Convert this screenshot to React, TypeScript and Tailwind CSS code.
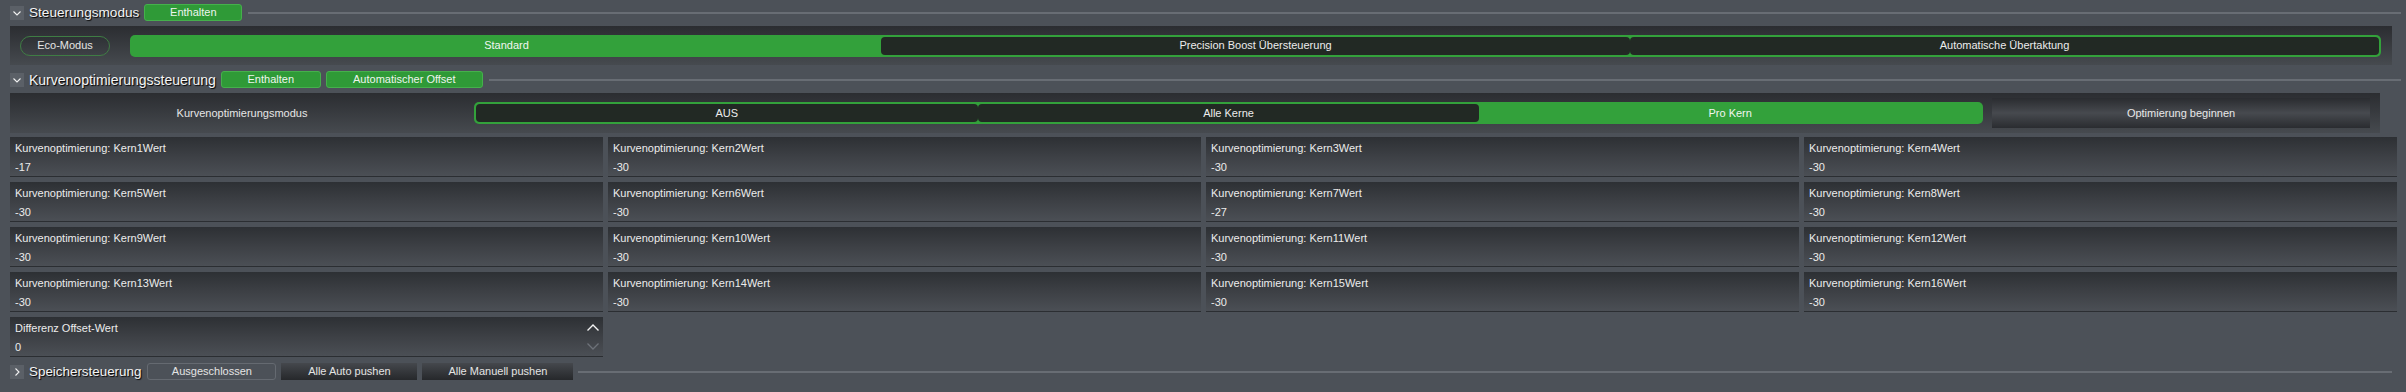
import React from "react";

const cores = [-17, -30, -30, -30, -30, -30, -27, -30, -30, -30, -30, -30, -30, -30, -30, -30];

function Chevron({ open }: { open: boolean }) {
  return (
    <div className="flex h-[14px] w-[14px] shrink-0 items-center justify-center bg-[#5b6067]">
      <svg width="10" height="10" viewBox="0 0 10 10" fill="none" stroke="#f2f2f2" strokeWidth="1.1">
        {open ? <polyline points="1.5,3.5 5,7 8.5,3.5" /> : <polyline points="3.5,1.5 7,5 3.5,8.5" />}
      </svg>
    </div>
  );
}

function GreenTag({ label, w }: { label: string; w: string }) {
  return (
    <div className={`flex h-[17px] ${w} shrink-0 items-center justify-center rounded-[3px] border border-[#45b04c] bg-[#2f9a37] text-[11px] text-[#eef5ee]`}>
      {label}
    </div>
  );
}

function SectionHeader({ open, title, size, children }: { open: boolean; title: string; size: string; children?: React.ReactNode }) {
  return (
    <div className="flex h-[17px] items-center">
      <Chevron open={open} />
      <span className={`ml-[5px] ${size} leading-none text-[#f4f4f4] [text-shadow:1px_1px_1px_#000]`}>{title}</span>
      <div className="ml-[5px] flex gap-[5px]">{children}</div>
      <div className="ml-[6px] mr-[5px] h-[2px] flex-1 bg-[#686d74]" />
    </div>
  );
}

function Segmented({ items, active }: { items: string[]; active: number }) {
  return (
    <div className="flex h-[22px] flex-1 rounded-[5px] bg-[#33a13b] p-[2px]">
      {items.map((it, i) => (
        <div
          key={it}
          className={`flex flex-1 items-center justify-center text-[11px] ${
            i === active ? "text-[#f0f6f0]" : "rounded-[4px] bg-[#222924] text-[#ececec]"
          }`}
        >
          {it}
        </div>
      ))}
    </div>
  );
}

function Card({ label, value, children }: { label: string; value: string; children?: React.ReactNode }) {
  return (
    <div className="relative h-[40px] border-b border-[#2b2e32] bg-linear-to-b from-[#2d3034] via-[#3d4045] to-[#4b4f55] pl-[5px] pt-[5px]">
      <div className="text-[11px] leading-[13px] text-[#ececec]">{label}</div>
      <div className="mt-[6px] text-[11px] leading-[13px] text-[#ececec]">{value}</div>
      {children}
    </div>
  );
}

export default function App() {
  return (
    <div className="min-h-screen w-full bg-[#4c5158] pl-[10px] pt-[4px] font-['Liberation_Sans',Arial,sans-serif] text-[#ececec]">
      <SectionHeader open title="Steuerungsmodus" size="text-[13.6px]">
        <GreenTag label="Enthalten" w="w-[98px]" />
      </SectionHeader>

      <div className="mr-[14px] mt-[5px] flex h-[39px] items-center bg-linear-to-b from-[#2b2d31] to-[#464a4f] pl-[10px] pr-[11px]">
        <div className="flex h-[20px] w-[90px] items-center justify-center rounded-full border-[1.5px] border-[#3f7d44] bg-linear-to-b from-[#2e3135] to-[#3e4146] text-[11px] text-[#e4e4e4]">
          Eco-Modus
        </div>
        <div className="ml-[20px] flex flex-1">
          <Segmented items={["Standard", "Precision Boost Übersteuerung", "Automatische Übertaktung"]} active={0} />
        </div>
      </div>

      <div className="mt-[6px]">
        <SectionHeader open title="Kurvenoptimierungssteuerung" size="text-[14px]">
          <GreenTag label="Enthalten" w="w-[100px]" />
          <GreenTag label="Automatischer Offset" w="w-[157px]" />
        </SectionHeader>
      </div>

      <div className="mr-[26px] mt-[5px] flex h-[40px] items-center bg-linear-to-b from-[#2b2d31] to-[#464a4f] pr-[10px]">
        <div className="flex w-[464px] items-center justify-center text-[11px] text-[#e6e6e6]">Kurvenoptimierungsmodus</div>
        <div className="flex w-[1509px]">
          <Segmented items={["AUS", "Alle Kerne", "Pro Kern"]} active={2} />
        </div>
        <div className="ml-[9px] flex h-[30px] flex-1 items-center justify-center bg-linear-to-b from-[#2a2c30] via-[#474a4f] to-[#2a2c30] text-[11px] text-[#e8e8e8]">
          Optimierung beginnen
        </div>
      </div>

      <div className="mr-[9px] mt-[4px] grid grid-cols-4 gap-[5px]">
        {cores.map((v, i) => (
          <Card key={i} label={`Kurvenoptimierung: Kern${i + 1}Wert`} value={String(v)} />
        ))}
        <Card label="Differenz Offset-Wert" value="0">
          <svg className="absolute right-[3px] top-[6px]" width="14" height="9" viewBox="0 0 14 9" fill="none" stroke="#f4f4f4" strokeWidth="1.4">
            <polyline points="1.5,7.5 7,2 12.5,7.5" />
          </svg>
          <svg className="absolute right-[3px] top-[25px]" width="14" height="9" viewBox="0 0 14 9" fill="none" stroke="#6d7279" strokeWidth="1.3">
            <polyline points="1.5,1.5 7,7 12.5,1.5" />
          </svg>
        </Card>
      </div>

      <div className="mt-[5px] flex h-[19px] items-center">
        <Chevron open={false} />
        <span className="ml-[5px] text-[13.4px] leading-none text-[#f4f4f4] [text-shadow:1px_1px_1px_#000]">Speichersteuerung</span>
        <div className="ml-[6px] flex gap-[5px]">
          <div className="flex h-[17px] w-[129px] items-center justify-center rounded-[3px] border border-[#656a71] text-[11px] text-[#e4e4e4]">
            Ausgeschlossen
          </div>
          <div className="flex h-[17px] w-[136px] items-center justify-center bg-linear-to-b from-[#45484d] to-[#26282b] text-[11px] text-[#e4e4e4]">
            Alle Auto pushen
          </div>
          <div className="flex h-[17px] w-[151px] items-center justify-center bg-linear-to-b from-[#45484d] to-[#26282b] text-[11px] text-[#e4e4e4]">
            Alle Manuell pushen
          </div>
        </div>
        <div className="ml-[5px] mr-[14px] h-[2px] flex-1 bg-[#686d74]" />
      </div>
    </div>
  );
}
